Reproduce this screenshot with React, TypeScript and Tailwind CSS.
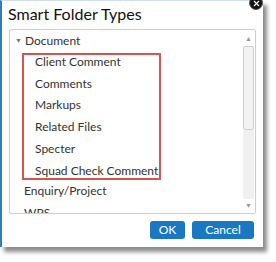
import { X } from "lucide-react";

const items = ["Client Comment", "Comments", "Markups", "Related Files", "Specter", "Squad Check Comment"];

export default function App() {
  return (
    <div className="relative w-[276px] h-[262px] bg-white overflow-hidden" style={{ fontFamily: 'Lato, "Open Sans", sans-serif' }}>
      <div className="relative w-[263px] h-[247px] bg-white border-l-2 border-l-[#2f7fb5] border-t border-t-[#cfe0ea] shadow-[4px_5px_4px_rgba(0,0,0,0.45)] flex flex-col">
        <h2 className="text-[16px] leading-5 text-[#111] pl-[6px] pt-[3px] whitespace-nowrap">Smart Folder Types</h2>

        <div className="mx-[7px] mt-[5px] h-[185px] border border-[#cfcfcf] rounded-[2px] flex overflow-hidden">
          <div className="flex-1 text-[12px] leading-[21.8px] text-[#333] whitespace-nowrap">
            <div className="flex items-center pl-[5px]">
              <span className="text-[7px] text-[#777] mr-[3px]">▼</span>
              <span>Document</span>
            </div>
            <div className="ml-[12px] mt-[1px] w-[139px] h-[127px] border-2 border-[#d9534f] pl-[11px]">
              <div className="-mt-[4px]">
                {items.map((t) => (
                  <div key={t}>{t}</div>
                ))}
              </div>
            </div>
            <div className="pl-[14px]">Enquiry/Project</div>
            <div className="pl-[14px]">WPS</div>
          </div>
          <div className="w-[13px] flex flex-col items-center pt-[4px] pb-[4px] bg-white">
            <span className="text-[7px] leading-[8px] text-[#999]">▲</span>
            <div className="mt-[4px] w-[11px] h-[84px] border border-[#cfcfcf] rounded-[2px] bg-[#f3f3f3]" />
            <div className="flex-1 w-[11px] bg-[#f0f0f0]" />
            <span className="text-[7px] leading-[8px] text-[#999] mt-[2px]">▼</span>
          </div>
        </div>

        <div className="flex justify-end gap-[7px] mr-[9px] mt-[7px]">
          <button className="w-[35px] h-[18px] rounded-[3px] bg-[#1a78c2] text-white text-[12px] leading-none">OK</button>
          <button className="w-[62px] h-[18px] rounded-[3px] bg-[#1a78c2] text-white text-[12px] leading-none">Cancel</button>
        </div>

        <div className="absolute -top-[5px] right-[0px] w-[14px] h-[14px] rounded-full bg-[#111] border border-[#555] flex items-center justify-center">
          <X className="w-[9px] h-[9px] text-white" strokeWidth={3} />
        </div>
      </div>
    </div>
  );
}
